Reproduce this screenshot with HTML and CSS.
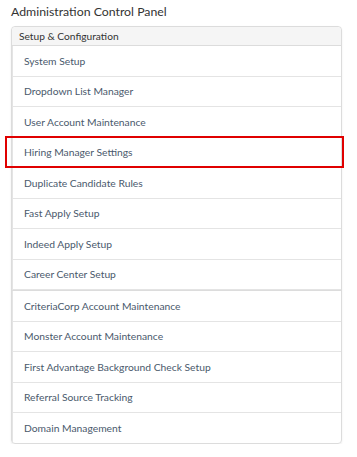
FILE: index.html
```html
<!DOCTYPE html>
<html lang="en">
<head>
    <meta charset="UTF-8">
    <meta name="viewport" content="width=device-width, initial-scale=1.0">
    <title>Administration Control Panel</title>
    <link rel="stylesheet" href="styles.css">
</head>
<body>
    <h1 class="page__title">Administration Control Panel</h1>

    <div class="panel">
        <div class="panel__heading">Setup &amp; Configuration</div>
        <ul class="panel__list">
            <li class="panel__item">System Setup</li>
            <li class="panel__item">Dropdown List Manager</li>
            <li class="panel__item">User Account Maintenance</li>
            <li class="panel__item panel__item--marked">Hiring Manager Settings</li>
            <li class="panel__item">Duplicate Candidate Rules</li>
            <li class="panel__item">Fast Apply Setup</li>
            <li class="panel__item">Indeed Apply Setup</li>
            <li class="panel__item">Career Center Setup</li>
        </ul>
        <ul class="panel__list">
            <li class="panel__item">CriteriaCorp Account Maintenance</li>
            <li class="panel__item">Monster Account Maintenance</li>
            <li class="panel__item">First Advantage Background Check Setup</li>
            <li class="panel__item">Referral Source Tracking</li>
            <li class="panel__item">Domain Management</li>
        </ul>
    </div>
</body>
</html>
```

FILE: styles.css
```css
* {
    margin: 0;
    padding: 0;
    box-sizing: border-box;
    font-family: Lato, "Open Sans", sans-serif;
}

body {
    background-color: #ffffff;
    color: #333;
    padding: 4px 15px 0 11px;
}

.page__title {
    font-size: 12.3px;
    font-weight: normal;
    color: #333;
    line-height: 15px;
    margin-bottom: 7px;
}

.panel {
    border: 1px solid #dcdcdc;
    border-radius: 4px;
    box-shadow: 0 1px 2px rgba(0, 0, 0, 0.08);
}

.panel__heading {
    background-color: #f5f5f5;
    border-bottom: 1px solid #dcdcdc;
    border-radius: 4px 4px 0 0;
    font-size: 10.2px;
    color: #333;
    padding: 2px 7px;
    line-height: 14px;
}

.panel__list {
    list-style: none;
}

.panel__list + .panel__list {
    border-top: 1px solid #dcdcdc;
}

.panel__item {
    position: relative;
    font-size: 10.3px;
    color: #4a596c;
    line-height: 16px;
    padding: 6.75px 11px;
    border-left: 1px solid #e4e4e4;
    border-bottom: 1px solid #e4e4e4;
}

.panel__list:last-child .panel__item:last-child {
    border-bottom: none;
}

/* red annotation box around the row */
.panel__item--marked::after {
    content: "";
    position: absolute;
    left: -8px;
    right: -3px;
    top: -2px;
    bottom: -1px;
    border: 2px solid #e00000;
}
```
